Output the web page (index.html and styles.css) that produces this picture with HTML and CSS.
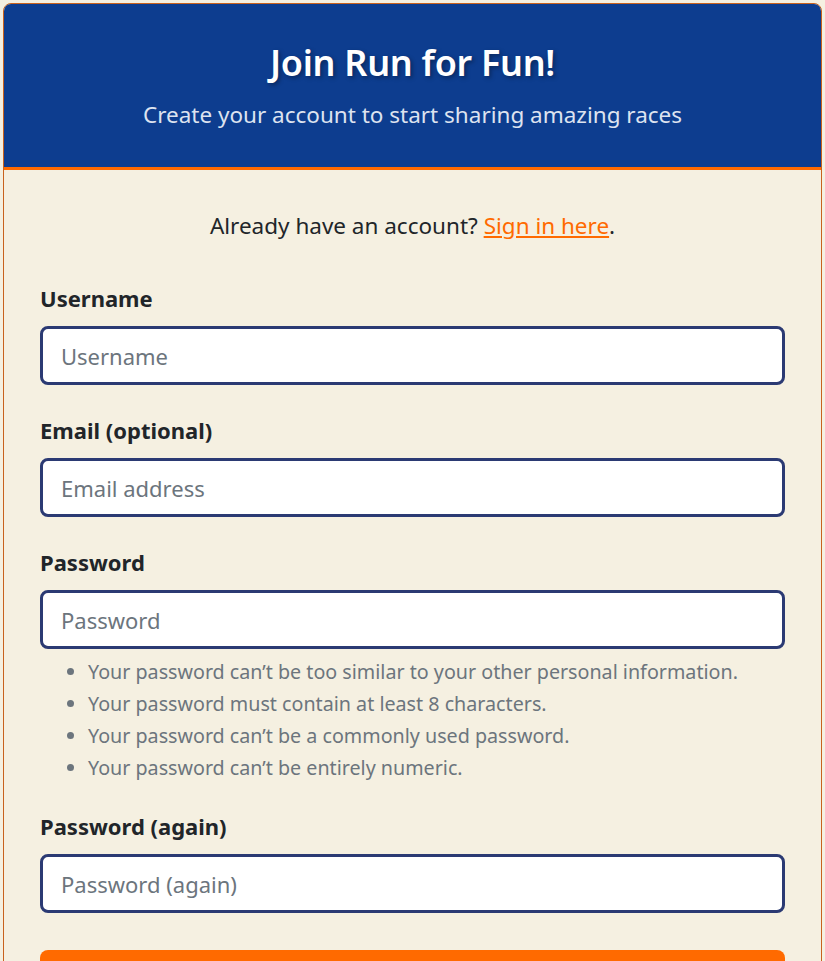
FILE: index.html
```html
<!DOCTYPE html>
<html lang="en">
<head>
<meta charset="utf-8">
<title>Join Run for Fun!</title>
<link rel="stylesheet" href="styles.css">
</head>
<body>
<div class="card">
  <div class="card-header">
    <h1 class="title">Join Run for Fun!</h1>
    <p class="subtitle">Create your account to start sharing amazing races</p>
  </div>
  <div class="card-body">
    <p class="signin">Already have an account? <a href="#" class="link">Sign in here</a>.</p>
    <form class="form">
      <div class="field">
        <label class="label" for="u">Username</label>
        <input class="input" id="u" type="text" placeholder="Username">
      </div>
      <div class="field">
        <label class="label" for="e">Email (optional)</label>
        <input class="input" id="e" type="email" placeholder="Email address">
      </div>
      <div class="field">
        <label class="label" for="p1">Password</label>
        <input class="input" id="p1" type="password" placeholder="Password">
        <ul class="help">
          <li>Your password can’t be too similar to your other personal information.</li>
          <li>Your password must contain at least 8 characters.</li>
          <li>Your password can’t be a commonly used password.</li>
          <li>Your password can’t be entirely numeric.</li>
        </ul>
      </div>
      <div class="field">
        <label class="label" for="p2">Password (again)</label>
        <input class="input" id="p2" type="password" placeholder="Password (again)">
      </div>
      <button class="btn" type="submit">Create Account</button>
    </form>
  </div>
</div>
</body>
</html>
```
FILE: styles.css
```css
html, body {
  margin: 0;
  padding: 0;
  background: #f5f0e1;
}
body {
  padding: 3px;
  font-family: "Noto Sans", "Open Sans", sans-serif;
  color: #212529;
}
.card {
  border: 1px solid #c8621e;
  border-radius: 8px;
  background: #f5f0e1;
  overflow: hidden;
}
.card-header {
  background: #0d3d8f;
  border-bottom: 3px solid #ff6a00;
  text-align: center;
  padding: 37px 20px 37px;
  color: #fff;
}
.title {
  margin: 0;
  font-size: 36px;
  font-weight: 600;
  line-height: 44px;
  letter-spacing: -0.3px;
  text-shadow: 2px 2px 4px rgba(0, 0, 0, 0.35);
}
.subtitle {
  margin: 15px 0 0;
  font-size: 22.5px;
  line-height: 30px;
  color: #dde3f0;
}
.card-body {
  padding: 40px 36px 40px;
}
.signin {
  margin: 0 0 41px;
  text-align: center;
  font-size: 22.5px;
  line-height: 32px;
}
.link {
  color: #ff6a00;
}
.form {
  display: flex;
  flex-direction: column;
}
.field {
  display: flex;
  flex-direction: column;
  margin-bottom: 30px;
}
.label {
  font-size: 22px;
  font-weight: 700;
  line-height: 30px;
  margin-bottom: 13px;
}
.input {
  box-sizing: border-box;
  height: 59px;
  width: 100%;
  border: 3px solid #2b3a73;
  border-radius: 8px;
  background: #fff;
  padding: 0 18px;
  font-family: inherit;
  font-size: 22px;
  color: #212529;
}
.input::placeholder {
  color: #6c757d;
}
.help {
  margin: 7px 0 -3px;
  padding-left: 48px;
  font-size: 19.7px;
  line-height: 32px;
  color: #6c757d;
}
.btn {
  margin-top: 7px;
  height: 60px;
  border: none;
  border-radius: 8px;
  background: #ff6a00;
  color: #fff;
  font-family: inherit;
  font-size: 22px;
  font-weight: 700;
}
```
